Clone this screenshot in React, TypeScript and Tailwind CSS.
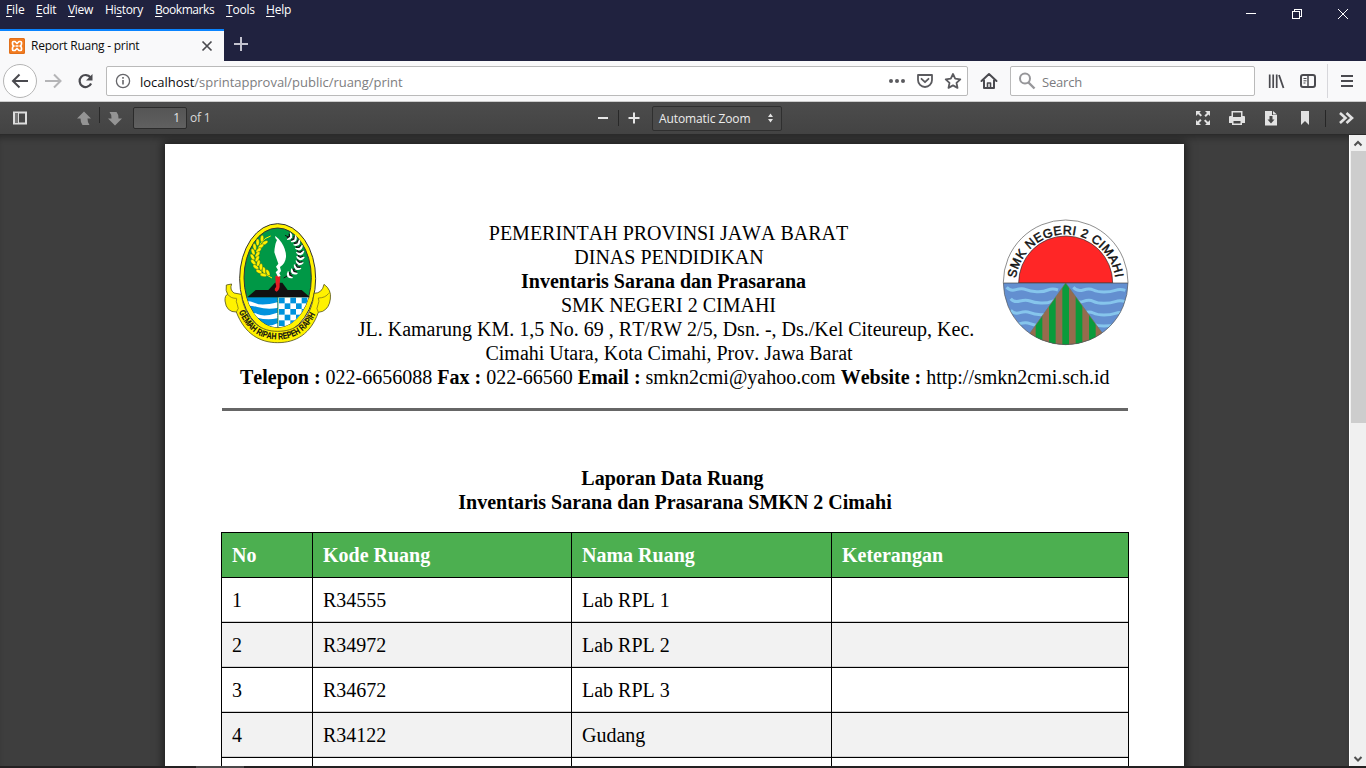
import React from "react";

const menu = [
  { pre: "", key: "F", post: "ile", w: "w-[30px]", t: "tracking-[-0.1px]" },
  { pre: "", key: "E", post: "dit", w: "w-[32px]", t: "tracking-[-0.3px]" },
  { pre: "", key: "V", post: "iew", w: "w-[37px]", t: "tracking-[-0.3px]" },
  { pre: "Hi", key: "s", post: "tory", w: "w-[50px]", t: "tracking-[-0.3px]" },
  { pre: "", key: "B", post: "ookmarks", w: "w-[71px]", t: "tracking-[-0.45px]" },
  { pre: "", key: "T", post: "ools", w: "w-[40px]", t: "tracking-[-0.2px]" },
  { pre: "", key: "H", post: "elp", w: "w-[40px]", t: "tracking-[-0.2px]" },
];

const rows = [
  ["1", "R34555", "Lab RPL 1", ""],
  ["2", "R34972", "Lab RPL 2", ""],
  ["3", "R34672", "Lab RPL 3", ""],
  ["4", "R34122", "Gudang", ""],
  ["", "", "", ""],
];

const cols = "grid grid-cols-[91px_259px_260px_297px]";

function TitleBar() {
  return (
    <header className="h-[61px] shrink-0 bg-[#20223f] flex flex-col">
      <div className="flex h-[29px] justify-between">
        <nav className="flex pl-1.5 pt-[1px] text-[12px] leading-[18px] text-white">
          {menu.map((m) => (
            <span key={m.pre + m.key + m.post} className={`${m.w} ${m.t} whitespace-nowrap`}>
              {m.pre}
              <span className="underline decoration-1 underline-offset-2">{m.key}</span>
              {m.post}
            </span>
          ))}
        </nav>
        <svg width="138" height="29" viewBox="0 0 138 29" fill="none" stroke="#fff" shapeRendering="crispEdges">
          <path d="M18 13.500h10M64.500 11.500h7v7h-7zM66.500 11.500v-2h7v7h-2" />
          <path d="M110 9l10 10M120 9l-10 10" shapeRendering="auto" />
        </svg>
      </div>
      <div className="flex h-8">
        <div className="flex w-[224px] items-center border-t-2 border-[#0a84ff] bg-[#f9f9fa] pl-[9px]">
          <svg width="16" height="16" viewBox="0 0 16 16" fill="none">
            <rect width="16" height="16" rx="1.500" fill="#f27b20" />
            <rect x="0.500" y="0.500" width="15" height="15" rx="1.500" stroke="#e0701c" />
            <path
              d="M3.500 6V4.500Q3.500 3.500 4.500 3.500H6L8 5.500 10 3.500h1.500q1 0 1 1V6q0 1.500-1.500 2 1.500.5 1.500 2v1.500q0 1-1 1H10L8 10.500l-2 2H4.500q-1 0-1-1V10Q3.500 8.500 5 8 3.500 7.500 3.500 6z"
              stroke="#fff"
              strokeWidth="1.700"
              strokeLinejoin="round"
            />
            <path d="M6.500 8h3" stroke="#fff" strokeWidth="1.500" />
          </svg>
          <span className="ml-1.5 w-[170px] text-[12px] text-[#0c0c0d] tracking-[-0.25px]">Report Ruang - print</span>
          <svg width="12" height="12" viewBox="0 0 12 12" stroke="#4a4a4f" strokeWidth="1.700">
            <path d="M1.500 1.500l9 9M10.500 1.500l-9 9" />
          </svg>
        </div>
        <svg className="ml-2.5 mt-2" width="14" height="14" viewBox="0 0 14 14" stroke="#c3c3cf" strokeWidth="2">
          <path d="M7 0v14M0 7h14" />
        </svg>
      </div>
    </header>
  );
}

function NavBar() {
  return (
    <div className="flex h-[41px] shrink-0 items-center bg-[#f9f9fa] border-b border-[#ccc]">
      <svg width="106" height="40" viewBox="0 0 106 40" fill="none">
        <circle cx="20" cy="20" r="16.500" fill="#fff" stroke="#b5b5b5" />
        <path d="M28 20H13M19.500 13.500L13 20l6.500 6.500" stroke="#4a4a4f" strokeWidth="2" />
        <path d="M45 20h15M54 13.500l6.500 6.500-6.500 6.500" stroke="#b5b5b7" strokeWidth="2" />
        <path d="M90.500 16.500a6 6 0 1 0 .6 6" stroke="#4a4a4f" strokeWidth="2.200" />
        <path d="M92.500 13v6.500H86z" fill="#4a4a4f" />
      </svg>
      <div className="flex h-[30px] w-[862px] items-center rounded-[2px] border border-[#bababa] bg-white">
        <svg className="ml-2" width="16" height="16" viewBox="0 0 16 16" fill="none" stroke="#66666a">
          <circle cx="8" cy="8" r="6.600" strokeWidth="1.300" />
          <path d="M8 7v4.500M8 4v1.700" strokeWidth="1.600" />
        </svg>
        <span className="ml-[9px] flex-1 pt-[3px] text-[13px] text-[#7d7d80] tracking-[-0.02px]">
          <span className="text-[#0c0c0d]">localhost</span>/sprintapproval/public/ruang/print
        </span>
        <svg width="79" height="28" viewBox="0 0 79 28" fill="none" stroke="#5b5b5f" strokeWidth="1.800" strokeLinejoin="round">
          <g fill="#5b5b5f" stroke="none">
            <circle cx="3" cy="14" r="2" />
            <circle cx="9" cy="14" r="2" />
            <circle cx="15" cy="14" r="2" />
          </g>
          <path d="M30 8h14v5a7 7 0 0 1-14 0z" />
          <path d="M33.500 11.800l3.500 3.400 3.500-3.400" strokeLinecap="round" />
          <path d="M65 7l2.200 4.700 5.100.6-3.800 3.500 1 5.100-4.500-2.500-4.500 2.500 1-5.100-3.800-3.500 5.100-.6z" />
        </svg>
      </div>
      <svg className="ml-3" width="18" height="18" viewBox="0 0 18 18" fill="none" stroke="#4a4a4f" strokeWidth="2" strokeLinejoin="round">
        <path d="M1.500 9L9 2l7.500 7M4 8.500V16h10V8.500" strokeLinecap="round" />
        <path d="M7.500 16v-5h3v5" strokeWidth="1.600" />
      </svg>
      <div className="ml-3 flex h-[30px] w-[245px] items-center rounded-[2px] border border-[#bababa] bg-white">
        <svg className="ml-[7px]" width="18" height="18" viewBox="0 0 18 18" fill="none" stroke="#97979a" strokeWidth="2">
          <circle cx="7" cy="6.500" r="5" />
          <path d="M10.500 10.500l6 6" strokeWidth="2.400" />
        </svg>
        <span className="ml-1.5 pt-[3px] text-[13px] text-[#7b7b7e] tracking-[-0.2px]">Search</span>
      </div>
      <svg width="111" height="40" viewBox="0 0 111 40" fill="none" stroke="#4a4a4f" strokeWidth="2">
        <path d="M14.700 13.500v13.500M18.200 13.500v13.500M21.700 13.500v13.500" strokeWidth="1.700" />
        <path d="M24 14l4.500 13" strokeWidth="1.800" />
        <rect x="46" y="14" width="14" height="12" rx="2" />
        <path d="M53 14v12" strokeWidth="1.500" />
        <path d="M48.500 17.500h3M48.500 19.800h3M48.500 22h2" strokeWidth="1" />
        <path d="M72.500 3v34" stroke="#d7d7db" strokeWidth="1" />
        <path d="M86 15h12M86 20h12M86 25h12" />
      </svg>
    </div>
  );
}

function PdfToolbar() {
  return (
    <div className="flex h-[33px] shrink-0 items-center border-b border-[#2b2b2b] bg-linear-to-b from-[#4c4c4c] to-[#434343]">
      <svg width="133" height="32" viewBox="0 0 133 32" fill="none">
        <path d="M14 10.500h12v11H14z" stroke="#ddd" strokeWidth="2" />
        <path d="M18.500 11v10" stroke="#ddd" strokeWidth="1" />
        <path d="M15 11h3v10h-3z" fill="#777" />
        <path d="M77 16.500L84 9.500l7 7h-3.500q0 4.500 2 6.500h-7q-2-2-2-6.500z" fill="#949494" />
        <path d="M99.500 5v16" stroke="#282828" />
        <path d="M108 16.500l7 7 7-7h-3.500q0-4.500-2-6.500h-7q2 2 2 6.500z" fill="#949494" />
      </svg>
      <div className="flex h-[22px] w-[54px] items-center justify-end rounded-[2px] border border-[#2b2b2b] bg-linear-to-b from-[#555] to-[#606060] pr-1.5 text-[12px] text-[#e4e4e4]">1</div>
      <span className="ml-[3px] w-[408px] text-[12px] text-[#d9d9d9] tracking-[-0.2px]">of 1</span>
      <svg width="54" height="32" viewBox="0 0 54 32" stroke="#e6e6e6" strokeWidth="2">
        <path d="M0 16h10M30.500 16h11M36 10.500v11" />
        <path d="M20.500 8v16" stroke="#282828" strokeWidth="1" />
      </svg>
      <div className="flex h-[25px] w-[130px] items-center justify-between rounded-[2px] border border-[#2f2f2f] bg-[#4a4a4a] pl-1.5 pr-[7px] text-[12px] text-[#ececec]">
        <span className="pt-[2px] tracking-[-0.1px]">Automatic Zoom</span>
        <svg width="7" height="10" viewBox="0 0 7 10" fill="#e4e4e4">
          <path d="M3.500 0.500L6 4H1zM3.500 9.500L6 6H1z" />
        </svg>
      </div>
      <svg className="ml-auto" width="176" height="32" viewBox="0 0 176 32" fill="#e2e2e2">
        <path d="M6 9h5l-1.600 1.600 2.600 2.600-1.400 1.400-2.600-2.600L6 14zM20 9v5l-1.600-1.600-2.600 2.600-1.400-1.400 2.600-2.600L15 9zM6 23v-5l1.600 1.600L10.200 17l1.400 1.400L9 21l2 2zM20 23h-5l1.600-1.600-2.600-2.600 1.400-1.400 2.600 2.600L20 18z" />
        <path fillRule="evenodd" d="M41.500 9h11v5H54q1 0 1 1v6h-3v2H42v-2h-3v-6q0-1 1-1h1.500zm1.500 1.500V15h8v-4.500zM43.500 19v2.500h7V19z" />
        <path fillRule="evenodd" d="M75 9h7v4h5v10.500H75zm4.500 5v3.500H77.500l3.500 4 3.500-4H82.500V14z" />
        <path d="M83 9l4 3.500h-4zM111 9h8v14l-4-4-4 4z" />
        <path d="M135.500 8v17" stroke="#262626" />
        <path d="M150 11l5.500 5-5.500 5M156.500 11l5.500 5-5.500 5" fill="none" stroke="#e2e2e2" strokeWidth="2.600" />
      </svg>
    </div>
  );
}

const checks = [0, 1, 2, 3, 4].flatMap((r) => [0, 1, 2, 3, 4, 5].filter((c) => (r + c) % 2 === 0).map((c) => [r, c]));

const wheat = [
  [160, 86, 30], [147, 97, 25], [138, 110, 15], [133, 124, 5], [131, 139, -5], [133, 154, -15], [140, 168, -28], [149, 181, -38], [161, 191, -52],
];

const cotton = [
  [240, 80, 25], [253, 88, 35], [262, 100, 50], [268, 114, 65], [271, 129, 80], [271, 144, 95], [268, 159, 105], [261, 173, 120], [251, 186, 130], [238, 196, 145],
];

function ProvinceEmblem() {
  return (
    <svg className="shrink-0" width="140" height="145" viewBox="0 0 420 435">
      <defs>
        <clipPath id="shield">
          <ellipse cx="203" cy="203" rx="101" ry="149" />
        </clipPath>
        <path id="motto" d="M84 300C110 362 150 388 203 388C260 388 302 356 326 290" />
      </defs>
      <ellipse cx="203" cy="206" rx="114" ry="165" fill="#fff200" stroke="#333" strokeWidth="3" />
      <ellipse cx="203" cy="203" rx="101" ry="149" fill="#009846" stroke="#333" strokeWidth="3" />
      <g clipPath="url(#shield)">
        <path d="M90 262h112v120H90z" fill="#0093dd" />
        <path d="M90 275q25-6 45 4t67-2v17q-30 6-60-3t-52 2zM90 310q30-8 52 2t60-4v17q-30 7-60-2t-52 2zM90 340q35-6 60 4t52-4v16q-30 7-60-1t-52 1z" fill="#fff" />
        <path d="M205 262h110v120H205z" fill="#fff" />
        {checks.map(([r, c]) => (
          <rect key={`${r}-${c}`} x={207 + c * 17} y={263 + r * 17} width="17" height="17" fill="#0093dd" />
        ))}
        <path d="M203 262v120" stroke="#777" strokeWidth="2" strokeDasharray="4 3" />
      </g>
      <path d="M112 262l25-22h38l20-22h22l16 22h42l25 22z" fill="#111" />
      <path d="M196 199q8-5 15 1l-2 22q1 18-9 23-8-2-5-10 6-5 2-13z" fill="#e31e24" />
      <path d="M204 200l-7-13 7-7-6-10 7-9-5-14-7-20q1-23 8-37-7-5-5-12 11 8 19 20 14 22 13 43-2 20-18 30l3 12-5 7 4 8z" fill="#fff" />
      <path d="M182 78Q144 89 142 139Q144 187 186 204" fill="none" stroke="#fff200" strokeWidth="3" />
      {wheat.map(([x, y, a]) => (
        <g key={y} fill="#fff200" stroke="#31501e" strokeWidth="1" transform={`translate(${x} ${y}) rotate(${a})`}>
          <ellipse cx="-4" cy="0" rx="5" ry="10" transform="rotate(-25)" />
          <ellipse cx="13" cy="2" rx="5" ry="10" transform="rotate(30)" />
        </g>
      ))}
      <path d="M225 76Q264 88 266 138Q263 187 221 204" fill="none" stroke="#111" strokeWidth="3" />
      {cotton.map(([x, y, a]) => (
        <g key={y} transform={`translate(${x} ${y}) rotate(${a})`}>
          <path d="M-4-13Q6-9 7 0 6 9-4 13-7 6-3 0-7-6-4-13z" fill="#fff" />
          <path d="M-6-8L-2 0l-4 8" fill="none" stroke="#111" strokeWidth="4" />
        </g>
      ))}
      <path
        d="M65 222Q58 239 72 249L94 253L98 275C118 340 155 364 203 364C255 364 292 338 308 275L312 250Q337 250 342 223Q365 239 361 267Q358 294 338 304L325 307C302 372 258 398 203 398C150 398 104 372 79 306Q49 307 45 273Q44 256 53 253Q46 243 49 225z"
        fill="#fff200"
        stroke="#55541c"
        strokeWidth="2.500"
        strokeLinejoin="round"
      />
      <path d="M53 253q10 13 27 12M80 266q-3 9 2 18 7 12-3 22M356 250q-10 14-31 14M325 264q4 10-1 20-7 12 1 23" fill="none" stroke="#666020" strokeWidth="2" />
      <text fontFamily="Liberation Sans Narrow, Liberation Sans, sans-serif" fontWeight="700" fontSize="27" fill="#111" stroke="#111" strokeWidth=".5">
        <textPath href="#motto" startOffset="6" textLength="296" lengthAdjust="spacingAndGlyphs">GEMAH RIPAH REPEH RAPIH</textPath>
      </text>
    </svg>
  );
}

const waves = [232, 266, 301, 334];

function SchoolEmblem() {
  return (
    <svg className="shrink-0" width="150" height="145" viewBox="0 0 450 435">
      <defs>
        <clipPath id="disc">
          <circle cx="227" cy="217" r="187" />
        </clipPath>
        <clipPath id="hill">
          <path d="M227 219L116 375V420H341V375z" />
        </clipPath>
        <path id="school" d="M78 206A150 150 0 0 1 376 206L377 220" />
      </defs>
      <circle cx="227" cy="217" r="187" fill="#fff" />
      <path d="M86 219A141 141 0 0 1 368 219z" fill="#ff2626" stroke="#333" strokeWidth="2" />
      <g clipPath="url(#disc)">
        <path d="M30 219h400v200H30z" fill="#638fd0" />
        {waves.map((y) => (
          <g key={y} fill="none" stroke="#86c5ec" strokeWidth="9">
            <path d={`M${50 + (y > 250 ? 12 : 0)} ${y}q10 12 28 7t30 0 32 6 34-5 30 0`} />
            <path d={`M250 ${y}q12 14 30 8t30 0 32 6 34-5 30 0`} />
          </g>
        ))}
        <g clipPath="url(#hill)">
          <path d="M110 219h240v200H110z" fill="#966b4d" />
          <path d="M137 219h20v200h-20zM177 219h20v200h-20zM217 219h20v200h-20zM257 219h20v200h-20zM297 219h20v200h-20z" fill="#0a9b3b" />
        </g>
        <path d="M227 219L116 375M227 219L341 375" stroke="#76735e" strokeWidth="2" />
      </g>
      <path d="M40 219h374" stroke="#444" strokeWidth="2" />
      <circle cx="227" cy="217" r="187" fill="none" stroke="#555" strokeWidth="2" />
      <text fontFamily="Liberation Sans, sans-serif" fontSize="37" letterSpacing="1.600" fill="#111" stroke="#111" strokeWidth="1.500">
        <textPath href="#school" startOffset="1">SMK NEGERI 2 CIMAHI</textPath>
      </text>
    </svg>
  );
}

function Sheet() {
  return (
    <article className="ml-[165px] mt-[9px] h-[640px] w-[1019px] shrink-0 bg-white pt-[66px] font-['Liberation_Serif',serif] text-[20px] leading-6 text-black [font-kerning:none] shadow-[0_0_9px_2px_rgba(0,0,0,0.55)]">
      <div className="flex h-[155px] items-start pl-[45px]">
        <ProvinceEmblem />
        <div className="flex w-[640px] flex-col items-center whitespace-nowrap pt-[11px]">
          <p className="-ml-[3px]">PEMERINTAH PROVINSI JAWA BARAT</p>
          <p className="-ml-[2px]">DINAS PENDIDIKAN</p>
          <p className="-ml-[13px] font-bold">Inventaris Sarana dan Prasarana</p>
          <p className="-ml-[3px]">SMK NEGERI 2 CIMAHI</p>
          <p className="-ml-[8px]">JL. Kamarung KM. 1,5 No. 69 , RT/RW 2/5, Dsn. -, Ds./Kel Citeureup, Kec.</p>
          <p className="-ml-[2px]">Cimahi Utara, Kota Cimahi, Prov. Jawa Barat</p>
        </div>
        <SchoolEmblem />
      </div>
      <p className="whitespace-nowrap pl-[75px]">
        <b>Telepon :</b> 022-6656088 <b>Fax :</b> 022-66560 <b>Email :</b> smkn2cmi@yahoo.com <b>Website :</b> http://smkn2cmi.sch.id
      </p>
      <div className="ml-[57px] mt-[19px] h-[3px] w-[906px] bg-[#666]" />
      <div className="mt-[55px] flex flex-col items-center whitespace-nowrap font-bold">
        <p className="-ml-[4px]">Laporan Data Ruang</p>
        <p className="ml-[1px]">Inventaris Sarana dan Prasarana SMKN 2 Cimahi</p>
      </div>
      <div className="ml-[56px] mt-[18px] w-[908px] border-l border-t border-black">
        <div className={`${cols} bg-[#4caf50] font-bold text-white`}>
          {["No", "Kode Ruang", "Nama Ruang", "Keterangan"].map((h) => (
            <div key={h} className="h-[45px] border-b border-r border-black pl-2.5 pt-[10px]">{h}</div>
          ))}
        </div>
        {rows.map((r, i) => (
          <div key={i} className={`${cols} ${i % 2 ? "bg-[#f2f2f2]" : "bg-white"}`}>
            {r.map((c, j) => (
              <div key={j} className="h-[45px] border-b border-r border-black pl-2.5 pt-[10px] shadow-[inset_0_-1px_0_#d0d0d0]">{c}</div>
            ))}
          </div>
        ))}
      </div>
    </article>
  );
}

function Scrollbar() {
  return (
    <div className="flex w-[17px] shrink-0 flex-col items-center border-l border-white bg-[#f0f0f0]">
      <svg width="16" height="16" viewBox="0 0 16 16" fill="none" stroke="#505050" strokeWidth="2">
        <path d="M4.500 10.500l3.500-3.500L11.500 10.500" />
      </svg>
      <div className="h-[272px] w-[15px] bg-[#cdcdcd]" />
      <svg className="mt-auto" width="16" height="17" viewBox="0 0 16 17" fill="none" stroke="#505050" strokeWidth="2">
        <path d="M4.500 8l3.500 3.500L11.500 8" />
      </svg>
    </div>
  );
}

export default function App() {
  return (
    <div className="flex h-[768px] w-[1366px] flex-col overflow-hidden font-['Open_Sans','Noto_Sans',sans-serif]">
      <TitleBar />
      <NavBar />
      <PdfToolbar />
      <div className="flex h-[631px] shrink-0">
        <main className="flex-1 overflow-hidden bg-[#3e3e3e] shadow-[inset_0_6px_6px_-3px_rgba(0,0,0,0.3)]">
          <Sheet />
        </main>
        <Scrollbar />
      </div>
      <div className="h-0.5 bg-[#242122] pl-[196px]">
        <div className="h-0.5 w-12 bg-[#4b494a]" />
      </div>
    </div>
  );
}
